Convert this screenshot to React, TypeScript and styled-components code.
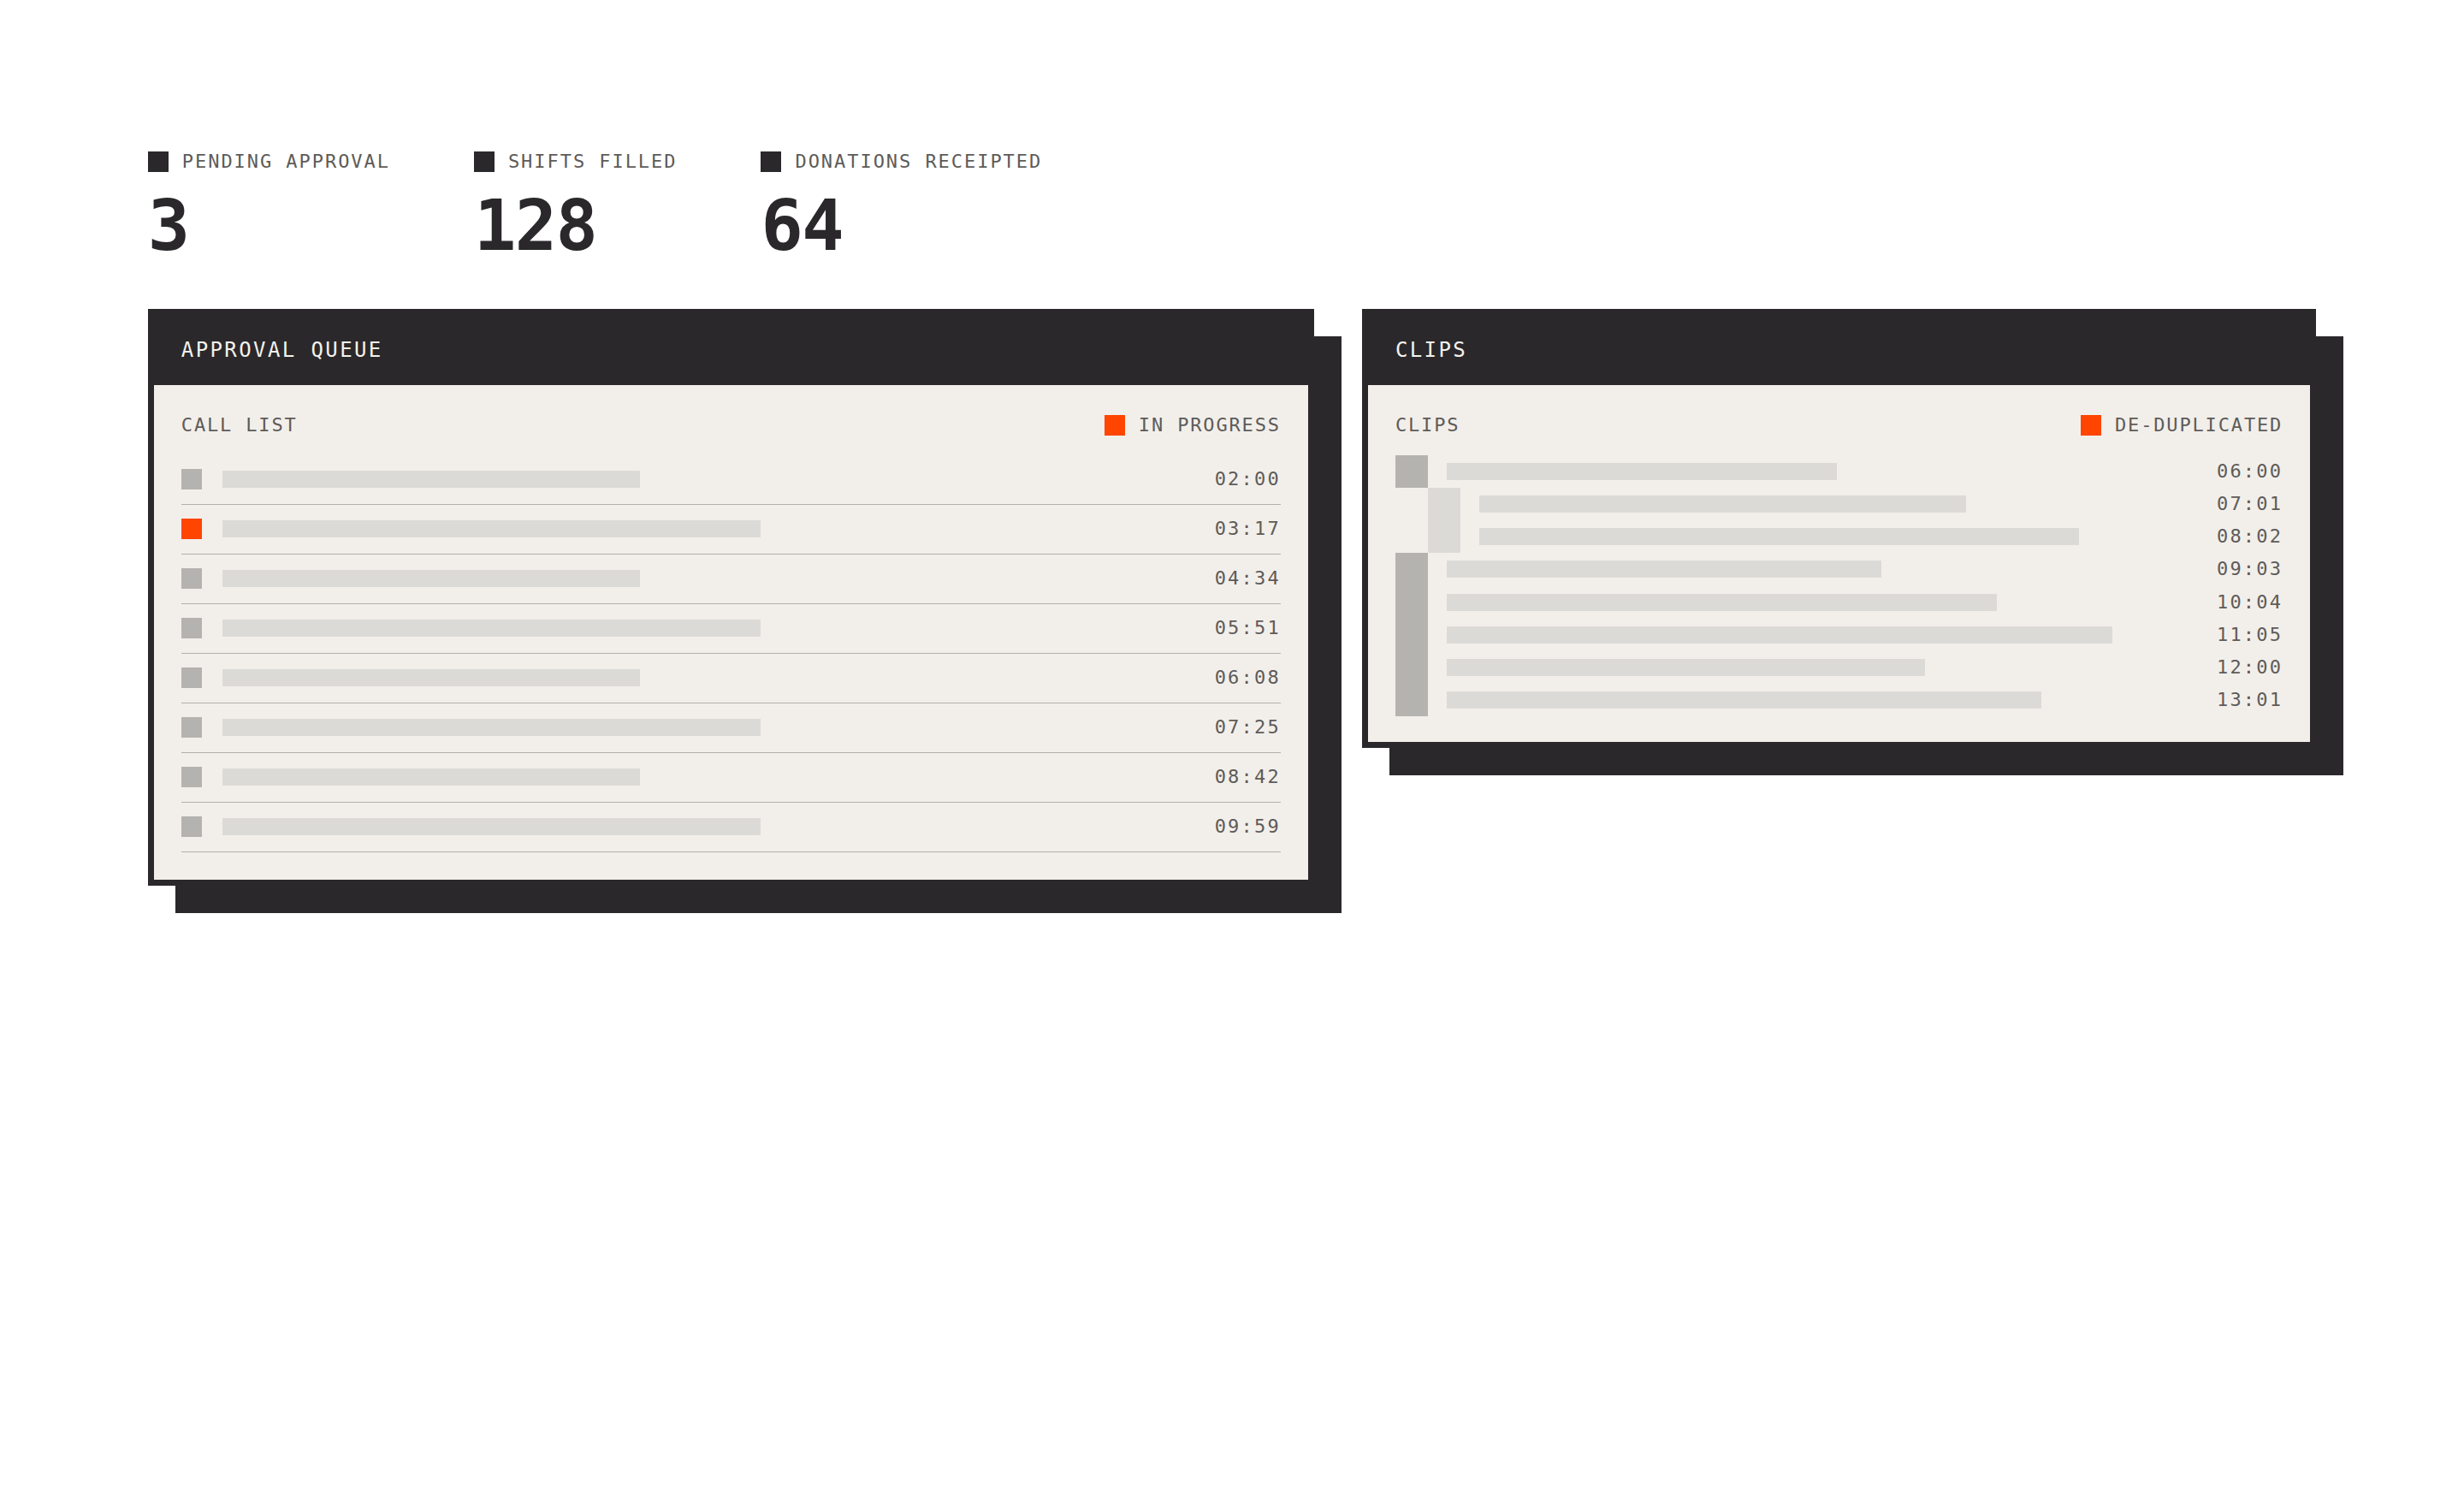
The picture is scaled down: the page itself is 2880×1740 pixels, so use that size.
import React from 'react';
import styled, { createGlobalStyle } from 'styled-components';

const INK = '#2a282b';
const PAPER = '#f2efeb';
const BAR = '#dcdad7';
const MUTED = '#b5b3b0';
const SIGNAL = '#ff4500';
const TEXT = '#5e5b58';
const MONO = '"DejaVu Sans Mono", "Liberation Mono", monospace';

const GlobalStyle = createGlobalStyle`
  html, body {
    margin: 0;
    padding: 0;
    background: #ffffff;
  }
  body {
    font-family: ${MONO};
    color: ${INK};
  }
`;

const Page = styled.div`
  padding: 6vw;
  box-sizing: border-box;
`;

const StatRow = styled.div`
  display: flex;
  gap: 98px;
  margin: 2px 0 56px;
`;

const Stat = styled.div`
  display: flex;
  flex-direction: column;
`;

const StatLabel = styled.div`
  display: flex;
  align-items: center;
  gap: 16px;
  height: 28px;
  font-size: 22px;
  line-height: 28px;
  letter-spacing: 1.95px;
  text-transform: uppercase;
  color: ${TEXT};
`;

const Swatch = styled.span<{ $tone: 'ink' | 'signal' | 'muted' }>`
  display: block;
  flex: none;
  width: 24px;
  height: 24px;
  background: ${p => (p.$tone === 'signal' ? SIGNAL : p.$tone === 'muted' ? MUTED : INK)};
`;

const StatValue = styled.div`
  margin-top: 20px;
  font-size: 82px;
  font-weight: 700;
  line-height: 1;
  letter-spacing: -0.02em;
  color: ${INK};
`;

const Grid = styled.div`
  display: grid;
  grid-template-columns: 11fr 9fr;
  gap: 56px;
  align-items: start;
`;

const Card = styled.section`
  background: ${INK};
  box-shadow: 32px 32px 0 ${INK};
  display: flex;
  flex-direction: column;
`;

const CardHeader = styled.header`
  height: 89px;
  box-sizing: border-box;
  padding: 8px 39px 0;
  display: flex;
  align-items: center;
  font-size: 24px;
  line-height: 28px;
  letter-spacing: 0.1em;
  color: #f4f2ee;
  text-transform: uppercase;
`;

const CardBody = styled.div<{ $tail?: number }>`
  background: ${PAPER};
  margin: 0 7px 7px;
  padding: 32px 32px ${p => p.$tail ?? 32}px;
`;

const BodyHead = styled.div`
  display: flex;
  align-items: center;
  justify-content: space-between;
  height: 30px;
  margin-bottom: 20px;
  font-size: 22px;
  line-height: 28px;
  letter-spacing: 1.85px;
  color: ${TEXT};
  text-transform: uppercase;
`;

const Legend = styled.div`
  display: flex;
  align-items: center;
  gap: 16px;
`;

const CallRow = styled.div`
  display: flex;
  align-items: center;
  height: 57px;
  border-bottom: 1px solid #b3afaa;
`;

const Track = styled.div`
  flex: 1;
  display: flex;
  align-items: center;
  margin-left: 24px;
`;

const Bar = styled.span<{ $w: number }>`
  display: block;
  width: ${p => p.$w}px;
  height: 20px;
  background: ${BAR};
`;

const Time = styled.span`
  flex: none;
  font-size: 22px;
  line-height: 28px;
  letter-spacing: 0.1em;
  color: ${TEXT};
`;

const ClipRow = styled.div<{ $level: number }>`
  display: flex;
  align-items: center;
  height: 38.2px;
  padding-left: ${p => p.$level * 38}px;
`;

const Block = styled.span<{ $tone: 'dark' | 'light' }>`
  display: block;
  flex: none;
  align-self: stretch;
  width: 38px;
  background: ${p => (p.$tone === 'dark' ? MUTED : BAR)};
`;

const ClipTrack = styled(Track)`
  margin-left: 22px;
`;

const stats = [
  { label: 'Pending approval', value: '3' },
  { label: 'Shifts filled', value: '128' },
  { label: 'Donations receipted', value: '64' },
];

const calls = [
  { time: '02:00', w: 488, live: false },
  { time: '03:17', w: 629, live: true },
  { time: '04:34', w: 488, live: false },
  { time: '05:51', w: 629, live: false },
  { time: '06:08', w: 488, live: false },
  { time: '07:25', w: 629, live: false },
  { time: '08:42', w: 488, live: false },
  { time: '09:59', w: 629, live: false },
];

const clips: { time: string; w: number; level: number; tone: 'dark' | 'light' }[] = [
  { time: '06:00', w: 456, level: 0, tone: 'dark' },
  { time: '07:01', w: 569, level: 1, tone: 'light' },
  { time: '08:02', w: 701, level: 1, tone: 'light' },
  { time: '09:03', w: 508, level: 0, tone: 'dark' },
  { time: '10:04', w: 643, level: 0, tone: 'dark' },
  { time: '11:05', w: 778, level: 0, tone: 'dark' },
  { time: '12:00', w: 559, level: 0, tone: 'dark' },
  { time: '13:01', w: 695, level: 0, tone: 'dark' },
];

export default function App() {
  return (
    <>
      <GlobalStyle />
      <Page>
        <StatRow>
          {stats.map(s => (
            <Stat key={s.label}>
              <StatLabel>
                <Swatch $tone="ink" />
                {s.label}
              </StatLabel>
              <StatValue>{s.value}</StatValue>
            </Stat>
          ))}
        </StatRow>

        <Grid>
          <Card>
            <CardHeader>Approval queue</CardHeader>
            <CardBody>
              <BodyHead>
                <span>Call list</span>
                <Legend>
                  <Swatch $tone="signal" />
                  In progress
                </Legend>
              </BodyHead>
              {calls.map(c => (
                <CallRow key={c.time}>
                  <Swatch $tone={c.live ? 'signal' : 'muted'} />
                  <Track>
                    <Bar $w={c.w} />
                  </Track>
                  <Time>{c.time}</Time>
                </CallRow>
              ))}
            </CardBody>
          </Card>

          <Card>
            <CardHeader>Clips</CardHeader>
            <CardBody $tail={30}>
              <BodyHead>
                <span>Clips</span>
                <Legend>
                  <Swatch $tone="signal" />
                  De-duplicated
                </Legend>
              </BodyHead>
              {clips.map(c => (
                <ClipRow key={c.time} $level={c.level}>
                  <Block $tone={c.tone} />
                  <ClipTrack>
                    <Bar $w={c.w} />
                  </ClipTrack>
                  <Time>{c.time}</Time>
                </ClipRow>
              ))}
            </CardBody>
          </Card>
        </Grid>
      </Page>
    </>
  );
}
